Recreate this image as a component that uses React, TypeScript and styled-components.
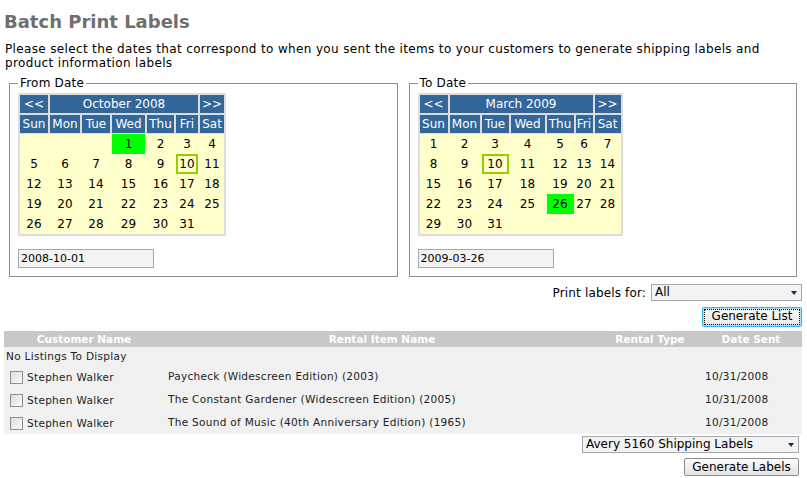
import React from 'react'
import styled, { createGlobalStyle } from 'styled-components'

const GlobalStyle = createGlobalStyle`
  html, body { margin: 0; padding: 0; background: #ffffff; }
  body {
    font-family: "DejaVu Sans", Verdana, sans-serif;
    font-size: 12px;
    color: #000000;
  }
`

type CalendarProps = {
  title: string
  widths: number[]
  offset: number
  days: number
  selected: number
  today: number
}

const dayNames = [ 'Sun', 'Mon', 'Tue', 'Wed', 'Thu', 'Fri', 'Sat' ]

const Calendar = ( { title, widths, offset, days, selected, today }: CalendarProps ) => {
  const cols = widths.map( w => `${w}px` ).join( ' ' )
  const list = Array.from( { length: days }, ( _, i ) => i + 1 )
  return (
    <CalendarBox>
      <HeadGrid $cols={cols}>
        <HeadCell>&lt;&lt;</HeadCell>
        <HeadCell $span={5}>{title}</HeadCell>
        <HeadCell>&gt;&gt;</HeadCell>
        {dayNames.map( d => <HeadCell key={d}>{d}</HeadCell> )}
      </HeadGrid>
      <DayGrid $cols={cols}>
        {list.map( d =>
          <DayCell
            key={d}
            $start={d === 1 ? offset + 1 : undefined}
            $selected={d === selected}
            $today={d === today}
          >
            {d}
          </DayCell>
        )}
      </DayGrid>
    </CalendarBox>
  )
}

const rows = [
  { name: 'Stephen Walker', item: 'Paycheck (Widescreen Edition) (2003)', date: '10/31/2008' },
  { name: 'Stephen Walker', item: 'The Constant Gardener (Widescreen Edition) (2005)', date: '10/31/2008' },
  { name: 'Stephen Walker', item: 'The Sound of Music (40th Anniversary Edition) (1965)', date: '10/31/2008' },
]

const App = () => (
  <Page>
    <GlobalStyle/>
    <Title>Batch Print Labels</Title>
    <Intro>
      Please select the dates that correspond to when you sent the items to your customers to generate shipping labels and
      product information labels
    </Intro>
    <DateRow>
      <DateSet>
        <Legend>From Date</Legend>
        <Calendar title='October 2008' widths={[ 28, 30, 28, 33, 27, 22, 24 ]} offset={3} days={31} selected={1} today={10}/>
        <DateInput readOnly value='2008-10-01'/>
      </DateSet>
      <DateSet>
        <Legend>To Date</Legend>
        <Calendar title='March 2009' widths={[ 28, 30, 27, 34, 27, 17, 26 ]} offset={0} days={31} selected={26} today={10}/>
        <DateInput readOnly value='2009-03-26'/>
      </DateSet>
    </DateRow>

    <Controls>
      <FilterLine>
        <span>Print labels for:</span>
        <SelectWrap $width={151}>
          <Select defaultValue='All'>
            <option>All</option>
          </Select>
        </SelectWrap>
      </FilterLine>
      <FocusButton><FocusRing>Generate List</FocusRing></FocusButton>
    </Controls>

    <Grid>
      <colgroup>
        <col style={{ width: 160 }}/>
        <col style={{ width: 436 }}/>
        <col style={{ width: 100 }}/>
        <col/>
      </colgroup>
      <thead>
        <tr>
          <HeadTh>Customer Name</HeadTh>
          <HeadTh>Rental Item Name</HeadTh>
          <HeadTh>Rental Type</HeadTh>
          <HeadTh>Date Sent</HeadTh>
        </tr>
      </thead>
      <tbody>
        <tr>
          <EmptyCell colSpan={4}>No Listings To Display</EmptyCell>
        </tr>
        {rows.map( ( r, i ) =>
          <ItemRow key={`row-${i}`}>
            <NameCell>
              <Check type='checkbox'/>
              <span>{r.name}</span>
            </NameCell>
            <ItemCell>{r.item}</ItemCell>
            <ItemCell/>
            <DateCell>{r.date}</DateCell>
          </ItemRow>
        )}
      </tbody>
    </Grid>

    <Footer>
      <SelectWrap $width={217}>
        <Select defaultValue='Avery 5160 Shipping Labels'>
          <option>Avery 5160 Shipping Labels</option>
        </Select>
      </SelectWrap>
      <PlainButton>Generate Labels</PlainButton>
    </Footer>
  </Page>
)

const Page = styled.div`
  width: 807px;
  box-sizing: border-box;
  padding: 0 5px 0 4px;
`

const Title = styled.h1`
  margin: 0;
  padding-top: 11px;
  font-size: 18px;
  line-height: 22px;
  font-weight: bold;
  color: #6f6f6f;
`

const Intro = styled.p`
  margin: 9px 0 0 1px;
  font-size: 12px;
  line-height: 14px;
  letter-spacing: 0.35px;
  color: #000000;
`

const DateRow = styled.div`
  display: grid;
  grid-template-columns: 1fr 1fr;
  gap: 11px;
  margin: 6px 5px 0 5px;
`

const DateSet = styled.fieldset`
  margin: 0;
  min-width: 0;
  padding: 3px 8px 8px 8px;
  border: 1px solid #8e8e8e;
`

const Legend = styled.legend`
  padding: 0 2px;
  font-size: 12px;
  line-height: 14px;
  letter-spacing: 0.2px;
  color: #000000;
`

const CalendarBox = styled.div`
  display: flex;
  flex-direction: column;
  gap: 1px;
  width: fit-content;
  padding: 2px;
  background: #dcdcdc;
`

const HeadGrid = styled.div<{ $cols: string }>`
  display: grid;
  grid-template-columns: ${p => p.$cols};
  grid-auto-rows: 18px;
  gap: 2px;
`

const HeadCell = styled.div<{ $span?: number }>`
  grid-column: span ${p => p.$span || 1};
  display: flex;
  align-items: center;
  justify-content: center;
  background: #336699;
  color: #ffffff;
  font-size: 12px;
  white-space: nowrap;
  overflow: hidden;
`

const DayGrid = styled.div<{ $cols: string }>`
  display: grid;
  grid-template-columns: ${p => p.$cols};
  grid-auto-rows: 20px;
  column-gap: 2px;
  background: #ffffcc;
`

const DayCell = styled.div<{ $start?: number, $selected: boolean, $today: boolean }>`
  ${p => p.$start ? `grid-column-start: ${p.$start};` : ''}
  display: flex;
  align-items: center;
  justify-content: center;
  font-size: 12px;
  color: #000000;
  background: ${p => p.$selected ? '#00ff00' : 'transparent'};
  box-shadow: ${p => p.$today ? 'inset 0 0 0 2px #99cc00' : 'none'};
`

const DateInput = styled.input`
  display: block;
  box-sizing: border-box;
  width: 136px;
  height: 19px;
  margin-top: 13px;
  padding: 0 2px;
  border: 1px solid #a5a9ae;
  background: #f3f3f3;
  font-family: "DejaVu Sans", Verdana, sans-serif;
  font-size: 11px;
  color: #000000;
  outline: none;
`

const Controls = styled.div`
  display: flex;
  flex-direction: column;
  align-items: flex-end;
  gap: 6px;
  margin-top: 7px;
`

const FilterLine = styled.div`
  display: flex;
  align-items: center;
  gap: 5px;
  font-size: 12px;
  letter-spacing: 0.15px;
`

const SelectWrap = styled.div<{ $width: number }>`
  position: relative;
  width: ${p => p.$width}px;
  height: 17px;
  &::after {
    content: '';
    position: absolute;
    right: 5px;
    top: 7px;
    border-left: 3.5px solid transparent;
    border-right: 3.5px solid transparent;
    border-top: 4px solid #1c2a5a;
    pointer-events: none;
  }
`

const Select = styled.select`
  appearance: none;
  box-sizing: border-box;
  width: 100%;
  height: 17px;
  margin: 0;
  padding: 0 3px;
  border: 1px solid #a5a9ae;
  border-radius: 0;
  background: #f3f3f3;
  font-family: "DejaVu Sans", Verdana, sans-serif;
  font-size: 12px;
  line-height: 15px;
  color: #000000;
  outline: none;
`

const FocusButton = styled.button`
  box-sizing: border-box;
  width: 100px;
  height: 20px;
  margin: 0;
  padding: 1px;
  border: 1px solid #35b4ec;
  border-radius: 2px;
  box-shadow: inset 0 0 0 1px #a9e1fb;
  background: linear-gradient(#fdfdfd, #e7e7e7);
  font-family: "DejaVu Sans", Verdana, sans-serif;
  font-size: 12px;
  color: #000000;
`

const FocusRing = styled.span`
  display: block;
  height: 100%;
  box-sizing: border-box;
  line-height: 14px;
  outline: 1px dotted #000000;
  outline-offset: -1px;
`

const Grid = styled.table`
  width: 798px;
  margin-top: 4px;
  border-collapse: collapse;
  table-layout: fixed;
  background: #f0f1f0;
  font-size: 10.5px;
  color: #222222;
`

const HeadTh = styled.th`
  height: 16px;
  padding: 0;
  background: #c8c8c8;
  color: #ffffff;
  font-weight: bold;
  text-align: center;
`

const EmptyCell = styled.td`
  height: 18px;
  padding: 0 0 0 2px;
  letter-spacing: 0.3px;
`

const ItemRow = styled.tr`
  height: 23px;
  letter-spacing: 0.3px;
`

const ItemCell = styled.td`
  padding: 0 0 2px 4px;
  white-space: nowrap;
`

const NameCell = styled.td`
  padding: 1px 0 0 6px;
  white-space: nowrap;
  span { vertical-align: middle; }
`

const DateCell = styled.td`
  padding: 0 0 2px 5px;
`

const Check = styled.input`
  appearance: none;
  box-sizing: border-box;
  width: 13px;
  height: 13px;
  margin: 0 4px 0 0;
  vertical-align: middle;
  border: 1px solid #8f8f8f;
  background: linear-gradient(135deg, #dcdcdc, #fbfbfb);
`

const Footer = styled.div`
  display: flex;
  flex-direction: column;
  align-items: flex-end;
  gap: 5px;
  margin: 2px 3px 0 0;
`

const PlainButton = styled.button`
  box-sizing: border-box;
  width: 115px;
  height: 18px;
  margin: 0;
  padding: 0;
  border: 1px solid #8d8d8d;
  border-radius: 2px;
  background: linear-gradient(#fcfcfc, #e3e3e3);
  font-family: "DejaVu Sans", Verdana, sans-serif;
  font-size: 12px;
  line-height: 15px;
  color: #000000;
`

export default App
